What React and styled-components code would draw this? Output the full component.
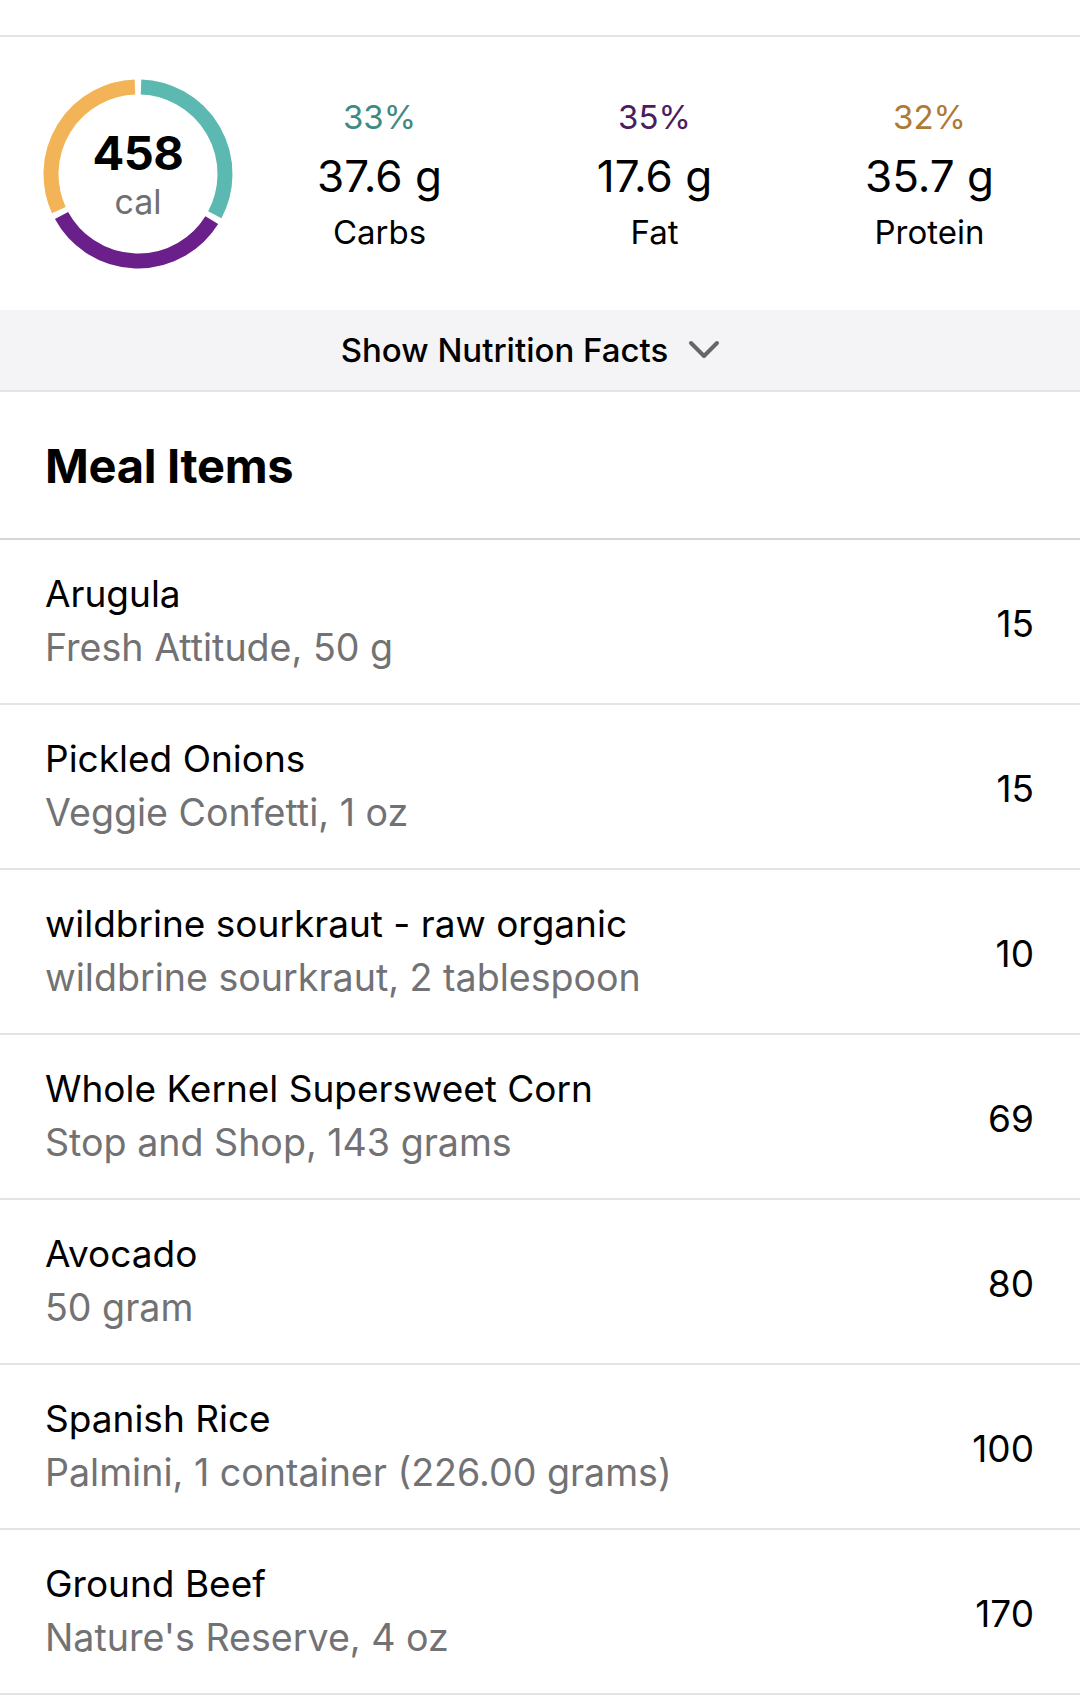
import React from 'react'
import styled, { createGlobalStyle } from 'styled-components'

const GlobalStyle = createGlobalStyle`
  html, body {
    margin: 0;
    padding: 0;
    background: #fff;
  }
  body {
    font-family: Inter, "Noto Sans", "Liberation Sans", sans-serif;
    color: #000;
    -webkit-font-smoothing: antialiased;
  }
`

const Page = styled.div`
  width: 1080px;
  min-height: 1707px;
  background: #fff;
`

const TopGap = styled.div`
  height: 35px;
  border-bottom: 2px solid #e4e4e6;
`

const Summary = styled.section`
  height: 273px;
  display: flex;
  align-items: center;
`

const RingWrap = styled.div`
  width: 242px;
  display: grid;
  justify-items: center;
  align-items: center;
  padding-left: 34px;
  box-sizing: border-box;

  & > * {
    grid-area: 1 / 1;
  }
`

const RingLabel = styled.div`
  display: flex;
  flex-direction: column;
  align-items: center;
  line-height: 1;
`

const Calories = styled.span`
  font-size: 47px;
  font-weight: 700;
  letter-spacing: -0.5px;
`

const CalUnit = styled.span`
  font-size: 34px;
  color: #707072;
  margin-top: 9px;
`

const Macros = styled.div`
  display: grid;
  grid-template-columns: repeat(3, 275px);
`

const Macro = styled.div`
  display: flex;
  flex-direction: column;
  align-items: center;
  line-height: 1;
`

const Percent = styled.span`
  font-size: 33px;
  color: ${p => p.$color};
  margin-top: 2px;
`

const Grams = styled.span`
  font-size: 44px;
  margin-top: 20px;
`

const MacroName = styled.span`
  font-size: 33px;
  margin-top: 18px;
`

const Toggle = styled.div`
  height: 80px;
  background: #f4f4f6;
  border-bottom: 2px solid #e4e4e6;
  display: flex;
  align-items: center;
  justify-content: center;
  gap: 20px;
  padding-right: 19px;
  font-size: 33px;
  font-weight: 500;
`

const Header = styled.h2`
  margin: 0;
  height: 146px;
  padding-left: 45px;
  display: flex;
  align-items: center;
  font-size: 47px;
  font-weight: 700;
  letter-spacing: -0.3px;
  border-bottom: 2px solid #d6d6d8;
`

const Row = styled.div`
  height: 163px;
  padding: 0 46px 0 45px;
  display: flex;
  align-items: center;
  justify-content: space-between;
  border-bottom: 2px solid #e4e4e6;
`

const ItemText = styled.div`
  display: flex;
  flex-direction: column;
  gap: 12px;
  line-height: 1.1;
`

const ItemName = styled.span`
  font-size: 37px;
`

const ItemDetail = styled.span`
  font-size: 37.6px;
  color: #727274;
`

const ItemCal = styled.span`
  font-size: 37px;
  margin-top: 4px;
`

const arc = (cx, cy, r, from, to) => {
  const rad = a => ((a - 90) * Math.PI) / 180
  const x1 = cx + r * Math.cos(rad(from))
  const y1 = cy + r * Math.sin(rad(from))
  const x2 = cx + r * Math.cos(rad(to))
  const y2 = cy + r * Math.sin(rad(to))
  const large = to - from > 180 ? 1 : 0
  return `M ${x1} ${y1} A ${r} ${r} 0 ${large} 1 ${x2} ${y2}`
}

const segments = [
  { from: 2, to: 118, color: '#5cb9b1' },
  { from: 122, to: 241.5, color: '#6a1f8b' },
  { from: 245.5, to: 358, color: '#f2b456' },
]

const Ring = () => (
  <svg width="190" height="190" viewBox="0 0 190 190">
    {segments.map(s => (
      <path key={s.from} d={arc(95, 95, 87, s.from, s.to)} fill="none" stroke={s.color} strokeWidth="15" />
    ))}
  </svg>
)

const Chevron = () => (
  <svg width="32" height="20" viewBox="0 0 32 20">
    <path d="M3 3 L16 16 L29 3" fill="none" stroke="#666669" strokeWidth="4" strokeLinecap="round" strokeLinejoin="round" />
  </svg>
)

const macros = [
  { pct: '33%', color: '#3f8b83', grams: '37.6 g', name: 'Carbs' },
  { pct: '35%', color: '#4a1d5f', grams: '17.6 g', name: 'Fat' },
  { pct: '32%', color: '#ae7a36', grams: '35.7 g', name: 'Protein' },
]

const items = [
  { name: 'Arugula', detail: 'Fresh Attitude, 50 g', cal: 15 },
  { name: 'Pickled Onions', detail: 'Veggie Confetti, 1 oz', cal: 15 },
  { name: 'wildbrine sourkraut - raw organic', detail: 'wildbrine sourkraut, 2 tablespoon', cal: 10 },
  { name: 'Whole Kernel Supersweet Corn', detail: 'Stop and Shop, 143 grams', cal: 69 },
  { name: 'Avocado', detail: '50 gram', cal: 80 },
  { name: 'Spanish Rice', detail: 'Palmini, 1 container (226.00 grams)', cal: 100 },
  { name: 'Ground Beef', detail: "Nature's Reserve, 4 oz", cal: 170 },
]

const App = () => {
  return (
    <Page>
      <GlobalStyle />
      <TopGap />
      <Summary>
        <RingWrap>
          <Ring />
          <RingLabel>
            <Calories>458</Calories>
            <CalUnit>cal</CalUnit>
          </RingLabel>
        </RingWrap>
        <Macros>
          {macros.map(m => (
            <Macro key={m.name}>
              <Percent $color={m.color}>{m.pct}</Percent>
              <Grams>{m.grams}</Grams>
              <MacroName>{m.name}</MacroName>
            </Macro>
          ))}
        </Macros>
      </Summary>
      <Toggle>
        <span>Show Nutrition Facts</span>
        <Chevron />
      </Toggle>
      <Header>Meal Items</Header>
      {items.map(item => (
        <Row key={item.name}>
          <ItemText>
            <ItemName>{item.name}</ItemName>
            <ItemDetail>{item.detail}</ItemDetail>
          </ItemText>
          <ItemCal>{item.cal}</ItemCal>
        </Row>
      ))}
    </Page>
  )
}

export default App
